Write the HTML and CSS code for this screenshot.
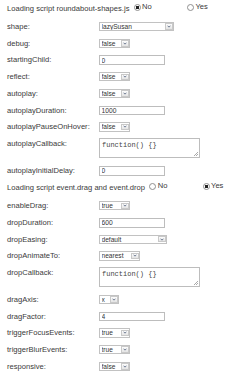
FILE: index.html
```html
<!doctype html>
<html>
<head>
  <title>Roundabout options</title>
  <link rel="stylesheet" href="styles.css">
</head>
<body>
  <form id="options">
    <div class="load">
      Loading script roundabout-shapes.js
      <label class="opt"><input type="radio" name="shapes" checked> No</label>
      <label class="opt"><input type="radio" name="shapes"> Yes</label>
    </div>
    <div class="row"><span class="lbl">shape:</span>
      <span class="sel w75"><select><option>lazySusan</option></select><span class="arr"><svg viewBox="0 0 6 4"><path d="M0.8 0.8 L3 3 L5.2 0.8"/></svg></span></span></div>
    <div class="row"><span class="lbl">debug:</span>
      <span class="sel w31"><select><option>false</option></select><span class="arr"><svg viewBox="0 0 6 4"><path d="M0.8 0.8 L3 3 L5.2 0.8"/></svg></span></span></div>
    <div class="row"><span class="lbl">startingChild:</span>
      <input class="txt" type="text" value="0"></div>
    <div class="row"><span class="lbl">reflect:</span>
      <span class="sel w31"><select><option>false</option></select><span class="arr"><svg viewBox="0 0 6 4"><path d="M0.8 0.8 L3 3 L5.2 0.8"/></svg></span></span></div>
    <div class="row"><span class="lbl">autoplay:</span>
      <span class="sel w31"><select><option>false</option></select><span class="arr"><svg viewBox="0 0 6 4"><path d="M0.8 0.8 L3 3 L5.2 0.8"/></svg></span></span></div>
    <div class="row"><span class="lbl">autoplayDuration:</span>
      <input class="txt" type="text" value="1000"></div>
    <div class="row"><span class="lbl">autoplayPauseOnHover:</span>
      <span class="sel w31"><select><option>false</option></select><span class="arr"><svg viewBox="0 0 6 4"><path d="M0.8 0.8 L3 3 L5.2 0.8"/></svg></span></span></div>
    <div class="row tall"><span class="lbl">autoplayCallback:</span>
      <textarea>function() {}</textarea></div>
    <div class="row"><span class="lbl">autoplayInitialDelay:</span>
      <input class="txt" type="text" value="0"></div>

    <div class="load">
      Loading script event.drag and event.drop
      <label class="opt"><input type="radio" name="drag"> No</label>
      <label class="opt"><input type="radio" name="drag" checked> Yes</label>
    </div>
    <div class="row"><span class="lbl">enableDrag:</span>
      <span class="sel w31"><select><option>true</option></select><span class="arr"><svg viewBox="0 0 6 4"><path d="M0.8 0.8 L3 3 L5.2 0.8"/></svg></span></span></div>
    <div class="row"><span class="lbl">dropDuration:</span>
      <input class="txt" type="text" value="600"></div>
    <div class="row"><span class="lbl">dropEasing:</span>
      <span class="sel w68"><select><option>default</option></select><span class="arr"><svg viewBox="0 0 6 4"><path d="M0.8 0.8 L3 3 L5.2 0.8"/></svg></span></span></div>
    <div class="row"><span class="lbl">dropAnimateTo:</span>
      <span class="sel w41"><select><option>nearest</option></select><span class="arr"><svg viewBox="0 0 6 4"><path d="M0.8 0.8 L3 3 L5.2 0.8"/></svg></span></span></div>
    <div class="row tall"><span class="lbl">dropCallback:</span>
      <textarea>function() {}</textarea></div>
    <div class="row"><span class="lbl">dragAxis:</span>
      <span class="sel w20"><select><option>x</option></select><span class="arr"><svg viewBox="0 0 6 4"><path d="M0.8 0.8 L3 3 L5.2 0.8"/></svg></span></span></div>
    <div class="row"><span class="lbl">dragFactor:</span>
      <input class="txt" type="text" value="4"></div>
    <div class="row"><span class="lbl">triggerFocusEvents:</span>
      <span class="sel w31"><select><option>true</option></select><span class="arr"><svg viewBox="0 0 6 4"><path d="M0.8 0.8 L3 3 L5.2 0.8"/></svg></span></span></div>
    <div class="row"><span class="lbl">triggerBlurEvents:</span>
      <span class="sel w31"><select><option>true</option></select><span class="arr"><svg viewBox="0 0 6 4"><path d="M0.8 0.8 L3 3 L5.2 0.8"/></svg></span></span></div>
    <div class="row"><span class="lbl">responsive:</span>
      <span class="sel w31"><select><option>false</option></select><span class="arr"><svg viewBox="0 0 6 4"><path d="M0.8 0.8 L3 3 L5.2 0.8"/></svg></span></span></div>
  </form>
</body>
</html>
```

FILE: styles.css
```css
body {
  margin: 0;
  padding: 0 0 0 7px;
  background: #fff;
  color: #3a3a3a;
  font-family: "Liberation Sans", Arial, sans-serif;
  font-size: 7.6px;
}

.load {
  height: 14px;
  line-height: 14px;
  padding-bottom: 4.5px;
  white-space: nowrap;
}
.opt {
  display: inline-flex;
  align-items: center;
  gap: 1.5px;
  margin-left: 2px;
  margin-right: 31px;
}
.opt input {
  appearance: none;
  width: 7px;
  height: 7px;
  margin: 0;
  border: 1px solid #8f8f8f;
  border-radius: 50%;
  background: #fff;
}
.opt input:checked {
  background: radial-gradient(circle, #222 0 1.6px, #fff 2px);
}

.row {
  display: grid;
  grid-template-columns: 92px auto;
  align-items: start;
  padding: 3.5px 0;
  line-height: 9.7px;
}
.row.tall { padding-bottom: 4px; }
.lbl { white-space: nowrap; }

.sel {
  display: inline-flex;
  align-items: center;
  height: 9.3px;
  box-sizing: border-box;
  border: 1px solid #c2c2c2;
  background: #fff;
  justify-self: start;
}
.w20 { width: 20px; }
.w31 { width: 31px; }
.w41 { width: 41px; }
.w68 { width: 68px; }
.w75 { width: 75px; }
.sel select {
  appearance: none;
  flex: 1;
  min-width: 0;
  height: 100%;
  border: 0;
  margin: 0;
  padding: 0 0 0 1.5px;
  background: transparent;
  color: #333;
  font-family: "Liberation Sans", Arial, sans-serif;
  font-size: 6.6px;
  line-height: 7px;
}
.arr {
  display: flex;
  align-items: center;
  justify-content: center;
  width: 8px;
  height: 6.5px;
  margin-right: 0.5px;
  box-sizing: border-box;
  border: 1px solid #c9c9c9;
  background: linear-gradient(#fdfdfd, #e4e4e4);
}
.arr svg {
  width: 4px;
  height: 3px;
  fill: none;
  stroke: #4a5a78;
  stroke-width: 1.2;
}

.txt {
  width: 66px;
  height: 9.7px;
  box-sizing: border-box;
  margin: 0;
  padding: 0 1.5px;
  border: 1px solid #bdbdbd;
  font-family: "Liberation Sans", Arial, sans-serif;
  font-size: 6.7px;
  color: #333;
}

textarea {
  width: 101px;
  height: 20.7px;
  box-sizing: border-box;
  margin: -1.2px 0 0;
  padding: 2px 2px;
  border: 1px solid #bdbdbd;
  font-family: "Liberation Mono", "Courier New", monospace;
  font-size: 7px;
  line-height: 9px;
  color: #444;
  overflow: hidden;
  resize: none;
  /* little resize grip in the corner */
  background: #fff linear-gradient(135deg, transparent 0 55%, #aaa 55% 63%, transparent 63% 77%, #aaa 77% 85%, transparent 85%) no-repeat right 1px bottom 1px / 5px 5px;
}
```
